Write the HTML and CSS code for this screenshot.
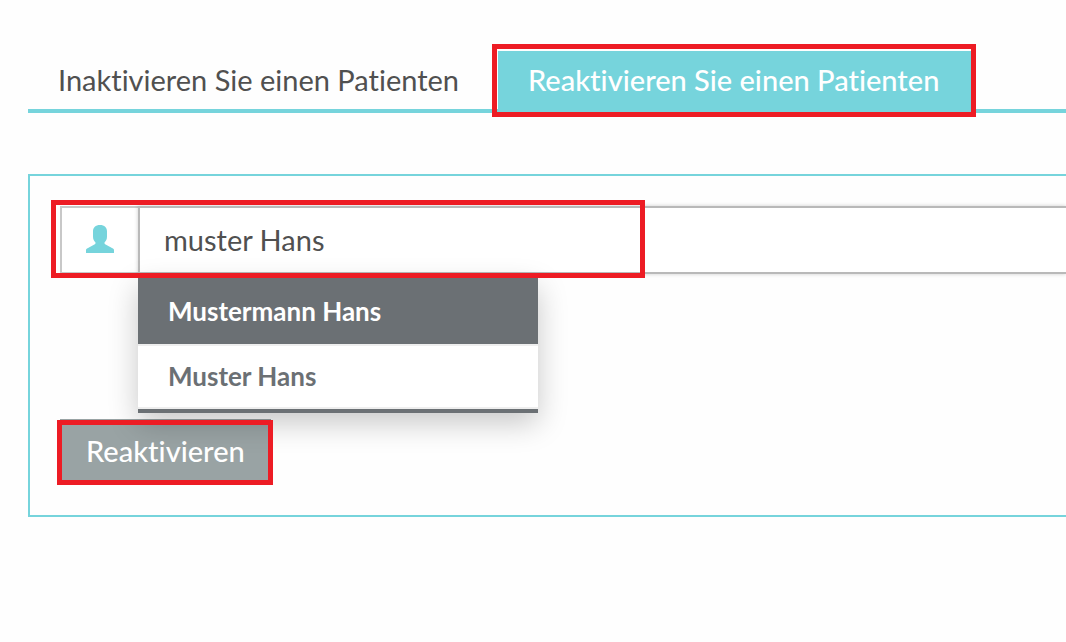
FILE: index.html
```html
<!DOCTYPE html>
<html lang="de">
<head>
<meta charset="UTF-8">
<meta name="viewport" content="width=device-width, initial-scale=1.0">
<title>Patienten</title>
<link rel="stylesheet" href="styles.css">
</head>
<body>

<nav class="tabs">
  <a class="tab" href="#inaktivieren">Inaktivieren Sie einen Patienten</a>
  <a class="tab active" href="#reaktivieren">Reaktivieren Sie einen Patienten<span class="mark mark-tab"></span></a>
</nav>

<form class="panel" id="reaktivieren">
  <div class="search">
    <label class="search-icon" for="patient" aria-label="Patient">
      <svg width="28" height="28" viewBox="0 0 28 28" aria-hidden="true">
        <path d="M14 0C9.500 0 7 2.500 7 6.500v5c0 3 1 4.500 2.500 6V18c0 1-.8 1.500-2 2L2 23C.5 23.800 0 24.200 0 25v3h28v-3c0-.8-.5-1.200-2-2l-5.500-3c-1.200-.5-2-1-2-2v-.5C20 16 21 14.500 21 11.500v-5C21 2.500 18.500 0 14 0z" fill="#76d4dc"/>
      </svg>
    </label>
    <input class="search-input" type="text" id="patient" value="muster Hans" autocomplete="off">
    <ul class="suggestions">
      <li><button type="button" class="suggestion selected">Mustermann Hans</button></li>
      <li><button type="button" class="suggestion">Muster Hans</button></li>
    </ul>
    <span class="mark mark-search"></span>
  </div>
  <button type="submit" class="submit">Reaktivieren<span class="mark mark-submit"></span></button>
</form>

</body>
</html>
```

FILE: styles.css
```css
* {
  box-sizing: border-box;
}
body {
  margin: 0;
  padding: 51px 0 0 28px;
  background-color: #fefefe;
  color: #505050;
  font-family: Lato, sans-serif;
  font-size: 29px;
  line-height: 34px;
  font-variant-ligatures: none;
  overflow-x: hidden;
}
button,
input {
  font: inherit;
  font-variant-ligatures: none;
}
.tabs {
  display: flex;
  gap: 7px;
  border-bottom: 4px solid #76d4dc;
}
.tab {
  position: relative;
  padding: 12px 32px 12px 30px;
  color: #505050;
  text-decoration: none;
  white-space: nowrap;
}
.tab.active {
  background-color: #76d4dc;
  color: #fff;
  font-weight: 500;
}
.panel {
  margin-top: 61px;
  padding: 30px 0 32px 30px;
  border: 2px solid #76d4dc;
  border-right: 0;
}
.search {
  position: relative;
  display: flex;
  height: 68px;
  margin-bottom: 145px;
}
.search-icon {
  display: flex;
  align-items: center;
  justify-content: center;
  width: 78px;
  padding-bottom: 2px;
  border: 2px solid #c8c8c8;
  border-right: 0;
  background-color: #fff;
}
.search-input {
  flex: 1;
  min-width: 0;
  padding: 0 24px;
  border: 2px solid #b9b9b9;
  border-right: 0;
  border-radius: 0;
  background-color: #fff;
  color: #505050;
  outline: none;
  box-shadow: 0 0 4px rgba(0, 0, 0, 0.2);
}
.suggestions {
  position: absolute;
  top: 72px;
  left: 78px;
  z-index: 1;
  width: 400px;
  margin: 0;
  padding: 0;
  list-style: none;
  background-color: #fff;
  border-bottom: 4px solid #6b7074;
  box-shadow: 0 10px 28px rgba(0, 0, 0, 0.22);
}
.suggestion {
  display: block;
  width: 100%;
  padding: 13px 30px 14px;
  border: 0;
  border-bottom: 2px solid #eee;
  background-color: #fff;
  color: #6b7074;
  font-size: 26px;
  font-weight: bold;
  text-align: left;
}
.suggestion.selected {
  padding: 16px 30px;
  background-color: #6b7074;
  background-clip: padding-box;
  color: #fff;
}
.submit {
  position: relative;
  display: block;
  height: 64px;
  padding: 0 26px;
  border: 0;
  background-color: #99a3a4;
  color: #fff;
  font-weight: 500;
}
.mark {
  position: absolute;
  z-index: 2;
  border: 5px solid #ed1c24;
  pointer-events: none;
}
.mark-tab {
  inset: -7px -5px -8px -6px;
}
.mark-search {
  top: -6px;
  left: -9px;
  width: 594px;
  height: 78px;
}
.mark-submit {
  inset: 1px -2px -2px -3px;
}
```
